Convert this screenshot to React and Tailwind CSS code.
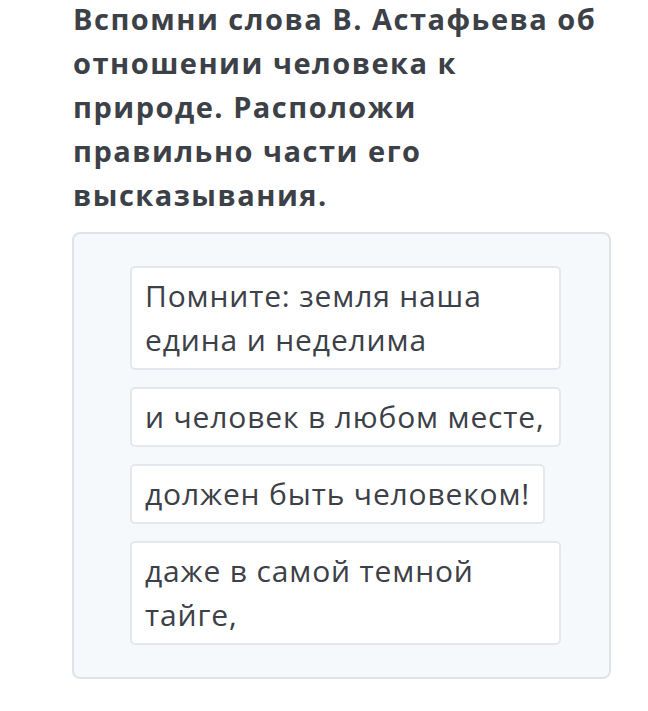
export default function App() {
  const cards = [
    { t: "Помните: земля наша едина и неделима", w: "w-[431px]" },
    { t: "и человек в любом месте,", w: "w-[431px] whitespace-nowrap" },
    { t: "должен быть человеком!", w: "w-fit whitespace-nowrap" },
    { t: "даже в самой темной тайге,", w: "w-[431px]" },
  ];
  return (
    <div className="w-[648px] h-[711px] bg-white overflow-hidden" style={{ fontFamily: '"Open Sans", sans-serif' }}>
      <div className="pl-[73px] mt-[-3px]">
        <h1 className="w-[532px] text-[29px] leading-[44px] font-bold text-[#3c4047] tracking-[1.5px]">
          Вспомни слова В. Астафьева об отношении человека к природе. Расположи правильно части его высказывания.
        </h1>
      </div>
      <div className="ml-[72px] mt-[15px] w-[539px] rounded-[8px] border-2 border-[#dfe3e7] bg-[#f5f9fc] pt-[32px] pb-[32px] pl-[56px]">
        <div className="flex flex-col items-start gap-[17px]">
          {cards.map((c, i) => (
            <div
              key={i}
              className={`${c.w} overflow-hidden rounded-[5px] border-2 border-[#e4e7eb] bg-white pl-[13px] pr-[13px] py-[6px] text-[30px] leading-[44px] text-[#3c4047] tracking-[0.85px]`}
            >
              {c.t}
            </div>
          ))}
        </div>
      </div>
    </div>
  );
}
